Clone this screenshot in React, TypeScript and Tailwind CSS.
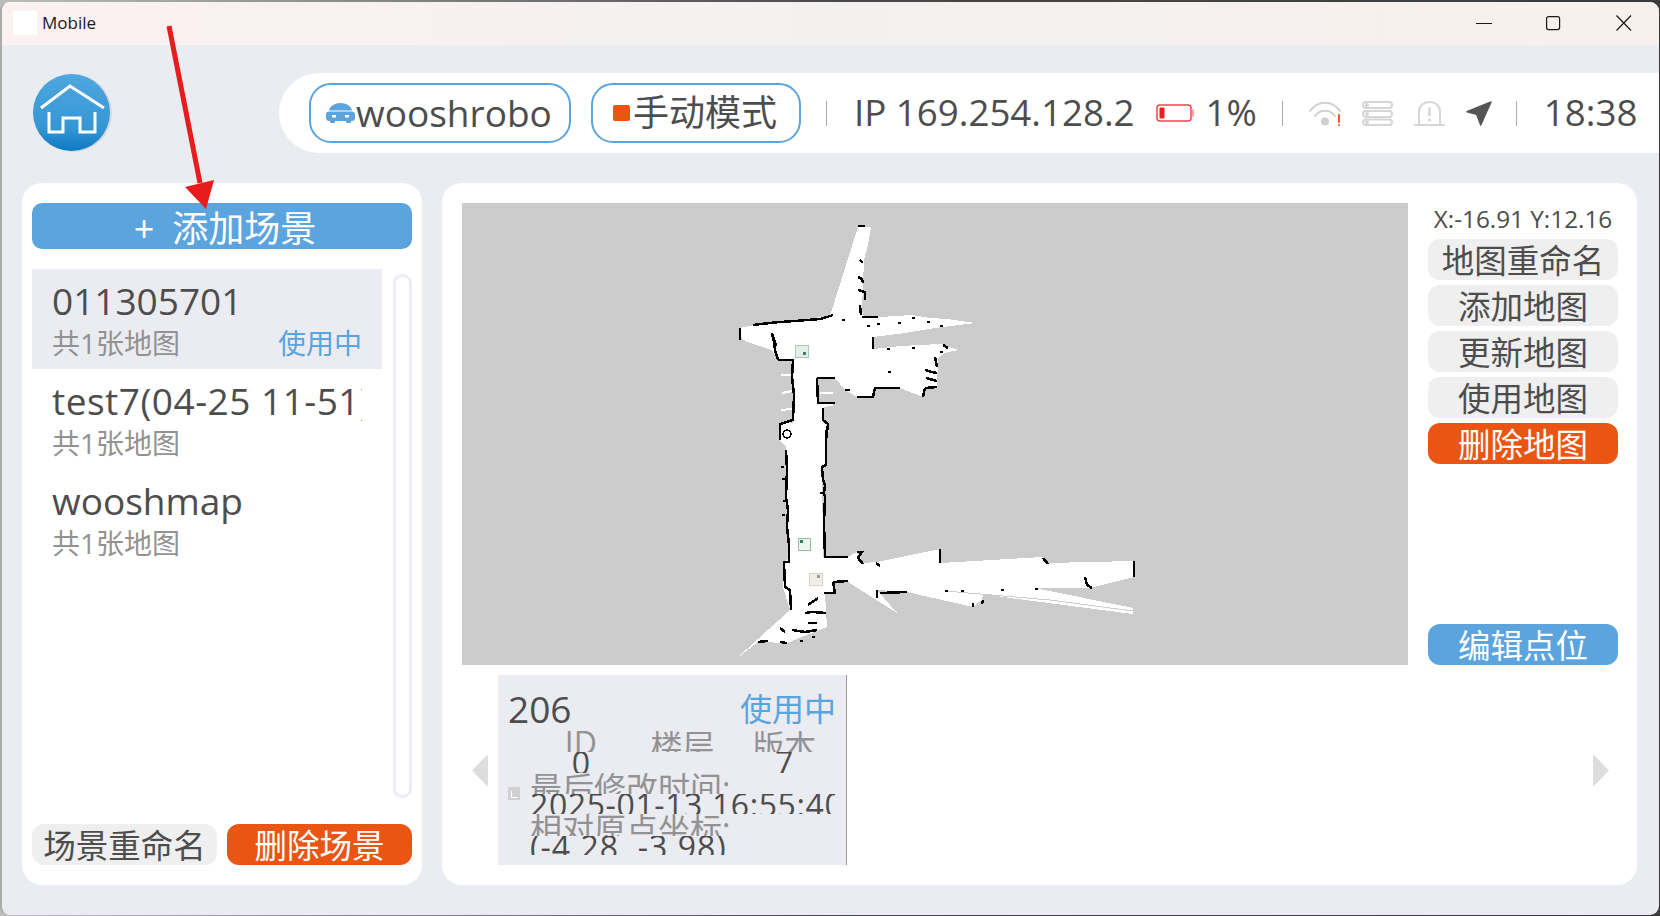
import React from "react";

const WHITE_AREA =
  "858,227 871,227 868,245 864,260 863,285 862,310 864,317 880,317 895,316 912,315 930,318 947,319 975,323 935,328 905,333 873,337 873,349 900,346 940,344 958,350 945,353 938,358 937,387 925,388 923,397 900,388 875,388 873,397 857,397 845,390 835,378 817,378 818,392 818,403 835,403 823,408 823,420 829,430 826,440 826,465 822,467 823,557 848,557 857,552 863,563 877,562 940,549 941,563 1043,557 1048,563 1133,561 1134,577 1090,588 1035,588 1133,608 1133,614 1010,598 983,594 982,600 973,607 907,592 877,590 897,613 848,582 833,582 833,593 825,593 827,627 787,643 758,642 736,659 790,610 783,587 785,562 788,558 786,447 779,440 780,423 793,423 793,360 778,360 772,350 747,342 740,337 740,328 754,325 830,316";

const WALLS = [
  "753,325 770,323 780,322 795,321 807,320 820,319 827,317 833,315",
  "858,226 865,226",
  "860,260 863,263",
  "858,277 862,279 863,283",
  "858,290 865,292 865,300",
  "860,305 861,315",
  "862,317 878,317",
  "740,328 740,340",
  "772,333 774,342 775,350 778,360",
  "773,336 776,346",
  "778,360 793,360 792,377 794,395 793,420 780,424 780,440",
  "817,378 835,378",
  "817,378 818,403 835,403",
  "823,408 823,420 828,424 826,440",
  "845,390 850,390",
  "857,397 873,397 875,388 900,388",
  "925,388 923,397",
  "925,388 937,387",
  "935,357 937,367",
  "925,370 932,372 937,373",
  "926,378 937,381",
  "943,345 948,348",
  "873,337 873,349",
  "826,430 826,465 822,467 823,480 825,485 824,493 825,497 824,523 825,557 848,557",
  "786,450 787,470 786,497 788,510 787,527 789,545 789,562 784,562 785,587 790,590 791,610",
  "857,552 862,552 858,558 863,564",
  "876,563 880,566",
  "940,549 940,563",
  "1043,558 1048,564",
  "1134,561 1134,577",
  "1085,577 1087,585 1092,588",
  "833,582 848,581",
  "833,582 835,593 824,593",
  "877,590 877,598",
  "880,593 907,592",
  "973,603 973,607",
  "983,600 982,604",
  "780,628 785,632",
  "792,630 805,632 817,630",
  "808,605 818,598",
  "805,613 812,612 826,613",
  "808,623 817,623",
  "780,642 787,643",
  "758,642 768,641",
];

const WALL_DOTS = [
  [867, 325], [877, 323], [898, 322], [912, 317], [927, 321], [940, 325], [887, 348], [912, 347], [842, 319], [888, 371],
  [781, 466], [782, 478], [783, 500], [782, 514], [1001, 589], [1035, 588], [961, 590], [945, 590], [820, 492], [823, 487],
  [800, 640], [812, 636], [935, 364], [940, 351],
];

const WHITE_TICKS = [
  "781,375 792,375",
  "782,393 792,391",
  "781,410 792,409",
  "820,393 833,393",
  "820,406 833,405",
];

function MapView() {
  return (
    <svg viewBox="462 203 946 462" className="block shrink-0 w-[946px] h-[462px] bg-[#cccccc]" shapeRendering="crispEdges">
      <polygon points={WHITE_AREA} fill="#fff" />
      <polyline points="945,591 1050,600 1133,611" fill="none" stroke="#ccc" strokeWidth="1" />
      {WHITE_TICKS.map((p) => (
        <polyline key={p} points={p} fill="none" stroke="#fff" strokeWidth="2" />
      ))}
      {WALLS.map((p) => (
        <polyline key={p} points={p} fill="none" stroke="#000" strokeWidth="2.500" />
      ))}
      {WALL_DOTS.map(([x, y]) => (
        <rect key={`${x}-${y}`} x={x} y={y} width="3" height="2" fill="#000" />
      ))}
      <circle cx="787" cy="434" r="4" fill="none" stroke="#000" strokeWidth="1.500" />
      {/* point markers */}
      <rect x="795.500" y="345.500" width="13" height="12" fill="#e3eee8" stroke="#a9c9b8" />
      <rect x="803" y="352" width="3" height="3" fill="#3f7f5f" />
      <rect x="798.500" y="538.500" width="12" height="12" fill="#eef6f1" stroke="#8fbfa3" />
      <rect x="800" y="540" width="3" height="3" fill="#2f7f55" />
      <rect x="809.500" y="573.500" width="13" height="12" fill="#efeee8" stroke="#d5d3c8" />
      <rect x="817" y="575" width="3" height="3" fill="#a09a80" />
    </svg>
  );
}

function HomeIcon() {
  return (
    <svg width="81" height="80" viewBox="0 0 81 80">
      <defs>
        <linearGradient id="homeFill" x1="0" y1="0" x2="0" y2="1">
          <stop offset="0" stopColor="#4fa7de" />
          <stop offset="0.7" stopColor="#3596d4" />
          <stop offset="1" stopColor="#0c78c2" />
        </linearGradient>
      </defs>
      <circle cx="41" cy="40" r="39" fill="#d5d8de" />
      <circle cx="39.500" cy="39.500" r="38.500" fill="url(#homeFill)" />
      <path d="M9 35 38 13 72 35" fill="none" stroke="#fff" strokeWidth="3" />
      <path d="M17 39V59H31V45H48V59H63V39" fill="none" stroke="#fff" strokeWidth="3" />
    </svg>
  );
}

function RobotIcon() {
  return (
    <svg width="29" height="20" viewBox="0 0 29 20" fill="#5ba4de">
      <path d="M3 7.500C4 2.800 9 0 14.500 0S25 2.800 26 7.500Z" />
      <path d="M3 8.500H26C27.700 8.500 29 9.800 29 11.500V15C29 16.700 27.700 18 26 18H3C1.300 18 0 16.700 0 15V11.500C0 9.800 1.300 8.500 3 8.500Z" />
      <rect x="4" y="17" width="5" height="3" rx="1" />
      <rect x="20" y="17" width="5" height="3" rx="1" />
      <rect x="6" y="12" width="4" height="2.500" fill="#fff" />
      <rect x="19" y="12" width="4" height="2.500" fill="#fff" />
    </svg>
  );
}

function BatteryIcon() {
  return (
    <svg width="39" height="18" viewBox="0 0 39 18">
      <rect x="1" y="1" width="34" height="16" rx="3" fill="#fff" stroke="#f0444b" strokeWidth="1.500" />
      <rect x="3.500" y="3.500" width="5" height="11" rx="1" fill="#ee1c25" />
      <rect x="36" y="5.500" width="2" height="7" fill="#f7a3a6" />
    </svg>
  );
}

function WifiIcon() {
  return (
    <svg width="32" height="25" viewBox="0 0 32 25" fill="none" stroke="#d0d0d0" strokeWidth="2" strokeLinecap="round">
      <path d="M1 10C9 -1 23 -1 31 10" />
      <path d="M6 15C11 8 21 8 26 15" />
      <circle cx="16" cy="20.500" r="4" fill="#d0d0d0" stroke="none" />
      <path d="M30 14V21" stroke="#f0562a" strokeWidth="2" />
      <circle cx="30" cy="24" r="1" fill="#f0562a" stroke="none" />
    </svg>
  );
}

function StackIcon() {
  return (
    <svg width="31" height="25" viewBox="0 0 31 25" fill="none" stroke="#d6d6d6" strokeWidth="2">
      <rect x="1" y="1" width="29" height="6" rx="3" />
      <rect x="1" y="10" width="29" height="6" rx="3" />
      <rect x="1" y="18.500" width="29" height="5.500" rx="2.750" />
      <circle cx="5" cy="4" r="1" fill="#d6d6d6" />
      <circle cx="5" cy="13" r="1" fill="#d6d6d6" />
      <circle cx="5" cy="21.200" r="1" fill="#d6d6d6" />
    </svg>
  );
}

function AlarmIcon() {
  return (
    <svg width="31" height="25" viewBox="0 0 31 25" fill="none" stroke="#d6d6d6" strokeWidth="2">
      <path d="M5 24V11C5 4.500 10 1 15.500 1S26 4.500 26 11V24" />
      <path d="M0 24H31" />
      <path d="M15.500 6.500V15" strokeWidth="2.500" />
      <circle cx="15.500" cy="19" r="1.500" fill="#d6d6d6" stroke="none" />
    </svg>
  );
}

function NavIcon() {
  return (
    <svg width="26" height="25" viewBox="0 0 26 25">
      <path d="M25 1 1 10.700 10.700 13.300 14.700 24Z" fill="#555" stroke="#555" strokeWidth="1.500" strokeLinejoin="round" />
    </svg>
  );
}

function Sep() {
  return <div className="w-px h-[25px] bg-[#aaaaaa] shrink-0" />;
}

function SceneRow({ name, active, wide }: { name: string; active?: boolean; wide?: boolean }) {
  return (
    <div className={`h-[100px] px-[20px] pt-[8px] ${active ? "bg-[#ebecf1]" : ""}`}>
      <div className={`text-[37px] leading-[48px] h-[49px] text-[#4d4d4d] whitespace-nowrap ${wide ? "tracking-[0.5px] overflow-hidden" : ""}`}>
        {name}
      </div>
      <div className="flex justify-between text-[28px] leading-[34px]">
        <span className="text-[#929292]">共1张地图</span>
        {active && <span className="text-[#5ba4de]">使用中</span>}
      </div>
    </div>
  );
}

function SideButton({ label, tone = "gray" }: { label: string; tone?: "gray" | "red" | "blue" }) {
  const toneClass =
    tone === "red"
      ? "bg-[#ea5514] text-white"
      : tone === "blue"
      ? "bg-[#5ba4de] text-white"
      : "bg-[#efefef] text-[#4d4d4d]";
  return (
    <div className={`h-[41px] rounded-[12px] pt-[4px] flex items-center justify-center text-[32.5px] leading-none ${toneClass}`}>
      {label}
    </div>
  );
}

function MapCard() {
  return (
    <div className="relative w-[349px] h-[190px] bg-[#ebecf1] border-r border-[#999999] shrink-0 overflow-hidden">
      <div className="flex justify-between items-center pl-[10px] pr-[10px] pt-[12px] h-[56px]">
        <span className="text-[37px] leading-[44px] text-[#4d4d4d]">206</span>
        <span className="text-[32px] leading-[44px] text-[#5ba4de]">使用中</span>
      </div>
      <div className="ml-[32px] w-[305px] text-[32px]">
        <div className="grid grid-cols-3 h-[21px] overflow-hidden text-center leading-[29px] text-[#929292]">
          <span className="leading-[23px]">ID</span>
          <span>楼层</span>
          <span>版本</span>
        </div>
        <div className="grid grid-cols-3 h-[21px] overflow-hidden text-center leading-[21px] text-[#4d4d4d]">
          <span>0</span>
          <span></span>
          <span>7</span>
        </div>
        <div className="h-[21px] overflow-hidden leading-[29px] text-[#929292] whitespace-nowrap">最后修改时间:</div>
        <div className="h-[20px] overflow-hidden leading-[21px] tracking-[0.6px] text-[#4d4d4d] whitespace-nowrap">2025-01-13 16:55:40</div>
        <div className="h-[22px] overflow-hidden leading-[29px] text-[#929292] whitespace-nowrap">相对原点坐标:</div>
        <div className="h-[19px] overflow-hidden leading-[21px] tracking-[1px] text-[#4d4d4d] whitespace-nowrap">(-4.28, -3.98)</div>
      </div>
      {/* broken picture placeholder */}
      <div className="absolute left-[10px] top-[112px] w-[12px] h-[13px] bg-[#d0d0d0] flex items-end justify-center pb-[2px]">
        <div className="w-[7px] h-[7px] border-l border-b border-white" />
      </div>
    </div>
  );
}

export default function App() {
  return (
    <div className="relative w-[1660px] h-[916px] overflow-hidden bg-gradient-to-r from-[#bdbdbd] via-[#4a4a4a] to-[#3a3a3a] pt-[2px] text-[#4d4d4d] [font-family:'Open_Sans','Noto_Sans_CJK_SC',sans-serif]">
      <div className="h-[913px] w-[1659px] rounded-[9px] border-l-2 border-[#ababab] bg-[#e9edf2] overflow-hidden">
        {/* Title bar */}
        <div className="h-[43px] pb-[2px] flex items-center bg-gradient-to-r from-[#fbf1f0] via-[#f3f1f0] to-[#f8f0ec]">
          <div className="ml-[11px] w-[24px] h-[24px] bg-white" />
          <span className="ml-[5px] text-[17px] text-[#1a1a1a]">Mobile</span>
          <svg className="ml-auto mr-[27px]" width="156" height="16" viewBox="0 0 156 16" fill="none" stroke="#1a1a1a" strokeWidth="1.200">
            <path d="M0 8.500H16" />
            <rect x="70.600" y="1.600" width="13" height="13" rx="2" />
            <path d="M140.500 0.500 155 15.500M155 0.500 140.500 15.500" />
          </svg>
        </div>

        {/* Status header */}
        <div className="flex mt-[28px] h-[80px] items-center">
          <div className="ml-[30px] w-[80px] shrink-0">
            <HomeIcon />
          </div>
          <div className="ml-[167px] flex-1 h-[80px] bg-white rounded-l-[40px] flex items-center pl-[30px] text-[36.7px]">
            <div className="w-[262px] h-[60px] rounded-[22px] border-2 border-[#5ba4de] flex items-center pl-[15px] gap-[1px] text-[37px]">
              <RobotIcon />
              <span>wooshrobo</span>
            </div>
            <div className="ml-[20px] w-[210px] h-[60px] rounded-[22px] border-2 border-[#5ba4de] flex items-center pl-[20px] gap-[3px]">
              <div className="w-[17px] h-[16px] rounded-[2px] bg-[#ea5514]" />
              <span className="text-[36px]">手动模式</span>
            </div>
            <div className="ml-[25px]">
              <Sep />
            </div>
            <span className="ml-[27px]">IP 169.254.128.2</span>
            <div className="ml-[21px]">
              <BatteryIcon />
            </div>
            <span className="ml-[11px]">1%</span>
            <div className="ml-[25px]">
              <Sep />
            </div>
            <div className="ml-[26px] flex items-center gap-[21px]">
              <WifiIcon />
              <StackIcon />
              <AlarmIcon />
              <NavIcon />
            </div>
            <div className="ml-[24px]">
              <Sep />
            </div>
            <span className="ml-[27px]">18:38</span>
          </div>
        </div>

        {/* Main */}
        <div className="flex mt-[30px] ml-[20px] gap-[20px]">
          {/* Scenes */}
          <div className="w-[400px] h-[702px] bg-white rounded-[20px] px-[10px] pt-[20px]">
            <div className="h-[46px] pl-[6px] pt-[6px] rounded-[10px] bg-[#5ba4de] flex items-center justify-center text-white text-[36px] leading-none gap-[18px]">
              <span>+</span>
              <span>添加场景</span>
            </div>
            <div className="flex mt-[20px] h-[555px]">
              <div className="w-[350px]">
                <SceneRow name="011305701" active />
                <SceneRow name="test7(04-25 11-51)" wide />
                <SceneRow name="wooshmap" />
              </div>
              <div className="ml-[11px] mt-[5px] w-[19px] h-[524px] rounded-[9px] border-[3px] border-[#eceef3]" />
            </div>
            <div className="flex gap-[10px]">
              <div className="flex-1">
                <SideButton label="场景重命名" />
              </div>
              <div className="flex-1">
                <SideButton label="删除场景" tone="red" />
              </div>
            </div>
          </div>

          {/* Maps */}
          <div className="w-[1195px] h-[702px] bg-white rounded-[20px] pl-[20px] pr-[19px] pt-[20px]">
            <div className="flex">
              <MapView />
              <div className="ml-[20px] w-[190px] flex flex-col">
                <div className="h-[36px] pb-[3px] flex items-center justify-center text-[24.3px] leading-none whitespace-nowrap">X:-16.91 Y:12.16</div>
                <div className="flex flex-col gap-[5px]">
                  <SideButton label="地图重命名" />
                  <SideButton label="添加地图" />
                  <SideButton label="更新地图" />
                  <SideButton label="使用地图" />
                  <SideButton label="删除地图" tone="red" />
                </div>
                <div className="mt-auto">
                  <SideButton label="编辑点位" tone="blue" />
                </div>
              </div>
            </div>
            <div className="flex items-center mt-[10px] h-[190px] pl-[10px]">
              <svg width="16" height="31" viewBox="0 0 16 31" fill="#dcdddc">
                <path d="M16 1.500V29.500C16 31 15 31 14 30L0 15.500 14 1C15 0 16 0 16 1.500Z" />
              </svg>
              <div className="ml-[10px]">
                <MapCard />
              </div>
              <svg className="ml-[746px]" width="16" height="31" viewBox="0 0 16 31" fill="#dcdddc">
                <path d="M0 1.500V29.500C0 31 1 31 2 30L16 15.500 2 1C1 0 0 0 0 1.500Z" />
              </svg>
            </div>
          </div>
        </div>
      </div>

      {/* Red annotation arrow drawn on the screenshot */}
      <svg className="absolute left-0 top-0 pointer-events-none" width="260" height="230" viewBox="0 0 260 230">
        <path d="M169 26 200 183" stroke="#e81c1c" strokeWidth="5" fill="none" />
        <polygon points="185,187 214,180 206,209" fill="#e81c1c" />
      </svg>
    </div>
  );
}
